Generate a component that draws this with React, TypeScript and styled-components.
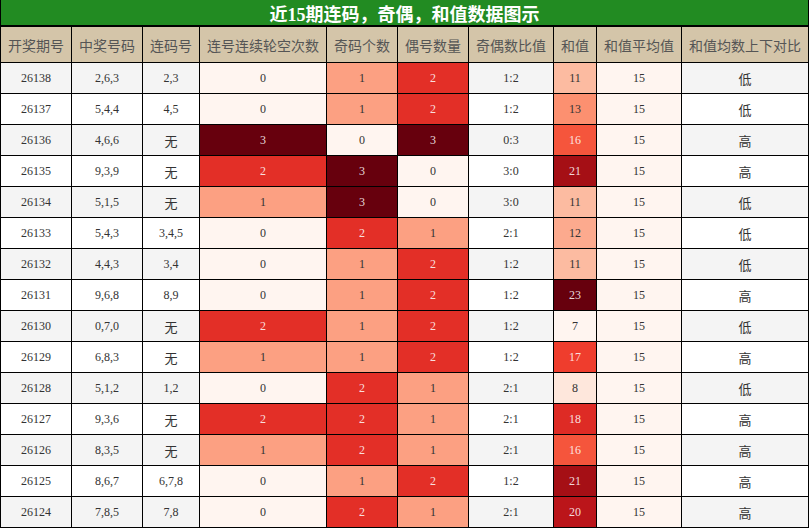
import React from "react";
import styled, { createGlobalStyle } from "styled-components";

const GlobalStyle = createGlobalStyle`
  html, body { margin: 0; padding: 0; background: #fff; }
  body { font-family: "Liberation Serif", "Noto Sans CJK SC", serif; }
`;

const COLS = "70px 70px 56px 126px 70px 70px 84px 42px 84px 126px";

const Board = styled.div`
  width: 809px;
  box-sizing: border-box;
  background: #000;
  padding: 0 1px 1px;
  display: flex;
  flex-direction: column;
  gap: 1px;
`;

const Title = styled.div`
  height: 25px;
  margin-bottom: 1px;
  background: #228b22;
  color: #fff;
  font-family: "Liberation Serif", "Noto Sans CJK SC", serif;
  font-weight: bold;
  font-size: 18px;
  display: flex;
  align-items: center;
  justify-content: center;
`;

const Row = styled.div`
  display: grid;
  grid-template-columns: ${COLS};
  gap: 1px;
`;

const HeadCell = styled.div`
  height: 35px;
  background: #d4c5a9;
  color: #555;
  font-family: "Noto Sans CJK SC", sans-serif;
  font-size: 14px;
  display: flex;
  align-items: center;
  justify-content: center;
  white-space: nowrap;
`;

const Cell = styled.div<{ $bg: string; $fg?: string; $cjk?: boolean }>`
  height: 30px;
  background: ${(p) => p.$bg};
  color: ${(p) => p.$fg || "#333"};
  font-family: ${(p) =>
    p.$cjk ? '"Noto Sans CJK SC", sans-serif' : '"Liberation Serif", "Noto Sans CJK SC", serif'};
  font-size: ${(p) => (p.$cjk ? "13px" : "12px")};
  display: flex;
  align-items: center;
  justify-content: center;
`;

const COUNT_COLORS = ["#fff5f0", "#fca082", "#e32f27", "#67000d"];
const SUM_COLORS: Record<number, string> = {
  7: "#fff5f0",
  8: "#fee7dc",
  11: "#fcbba1",
  12: "#fcaa8e",
  13: "#fc9070",
  16: "#f5553c",
  17: "#ef3d2d",
  18: "#de2b25",
  20: "#bb151a",
  21: "#a50f15",
  23: "#67000d",
};
const LIGHT = "rgba(255,255,255,0.85)";

const headers = [
  "开奖期号",
  "中奖号码",
  "连码号",
  "连号连续轮空次数",
  "奇码个数",
  "偶号数量",
  "奇偶数比值",
  "和值",
  "和值平均值",
  "和值均数上下对比",
];

type R = [string, string, string, number, number, number, string, number, string];

const rows: R[] = [
  ["26138", "2,6,3", "2,3", 0, 1, 2, "1:2", 11, "低"],
  ["26137", "5,4,4", "4,5", 0, 1, 2, "1:2", 13, "低"],
  ["26136", "4,6,6", "无", 3, 0, 3, "0:3", 16, "高"],
  ["26135", "9,3,9", "无", 2, 3, 0, "3:0", 21, "高"],
  ["26134", "5,1,5", "无", 1, 3, 0, "3:0", 11, "低"],
  ["26133", "5,4,3", "3,4,5", 0, 2, 1, "2:1", 12, "低"],
  ["26132", "4,4,3", "3,4", 0, 1, 2, "1:2", 11, "低"],
  ["26131", "9,6,8", "8,9", 0, 1, 2, "1:2", 23, "高"],
  ["26130", "0,7,0", "无", 2, 1, 2, "1:2", 7, "低"],
  ["26129", "6,8,3", "无", 1, 1, 2, "1:2", 17, "高"],
  ["26128", "5,1,2", "1,2", 0, 2, 1, "2:1", 8, "低"],
  ["26127", "9,3,6", "无", 2, 2, 1, "2:1", 18, "高"],
  ["26126", "8,3,5", "无", 1, 2, 1, "2:1", 16, "高"],
  ["26125", "8,6,7", "6,7,8", 0, 1, 2, "1:2", 21, "高"],
  ["26124", "7,8,5", "7,8", 0, 2, 1, "2:1", 20, "高"],
];

const CountCell = ({ v }: { v: number }) => (
  <Cell $bg={COUNT_COLORS[v]} $fg={v >= 2 ? LIGHT : "#333"}>
    {v}
  </Cell>
);

export default function App() {
  return (
    <>
      <GlobalStyle />
      <Board>
        <Title>近15期连码，奇偶，和值数据图示</Title>
        <Row>
          {headers.map((h) => (
            <HeadCell key={h}>{h}</HeadCell>
          ))}
        </Row>
        {rows.map((r, i) => {
          const stripe = i % 2 === 0 ? "#f4f4f4" : "#ffffff";
          return (
            <Row key={r[0]}>
              <Cell $bg={stripe}>{r[0]}</Cell>
              <Cell $bg={stripe}>{r[1]}</Cell>
              <Cell $bg={stripe} $cjk={r[2] === "无"}>
                {r[2]}
              </Cell>
              <CountCell v={r[3]} />
              <CountCell v={r[4]} />
              <CountCell v={r[5]} />
              <Cell $bg={stripe}>{r[6]}</Cell>
              <Cell $bg={SUM_COLORS[r[7]]} $fg={r[7] >= 16 ? LIGHT : "#333"}>
                {r[7]}
              </Cell>
              <Cell $bg="#fff5f0">15</Cell>
              <Cell $bg={stripe} $cjk>
                {r[8]}
              </Cell>
            </Row>
          );
        })}
      </Board>
    </>
  );
}
